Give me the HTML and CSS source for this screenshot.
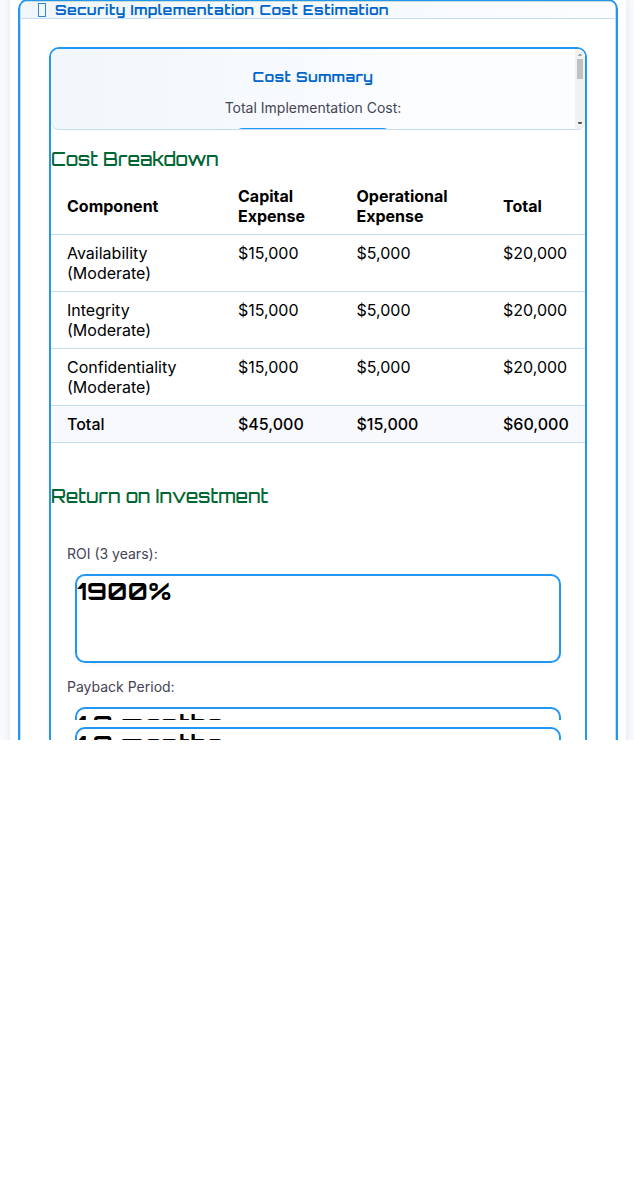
FILE: index.html
```html
<!DOCTYPE html>
<html lang="en">
<head>
<meta charset="utf-8">
<title>Security Implementation Cost Estimation</title>
<link rel="stylesheet" href="styles.css">
</head>
<body>
<div class="page">
  <div class="panel">
    <section class="widget">
      <header class="widget-head"><i class="glyph"></i><h2>Security Implementation Cost Estimation</h2></header>
      <div class="content">
        <div class="summary">
          <div class="summary-body">
            <h3>Cost Summary</h3>
            <p>Total Implementation Cost:</p>
            <div class="value-edge"></div>
          </div>
          <div class="scrollbar"><svg width="10" height="80" viewBox="0 0 10 80"><path d="M3 7h4L6 5H4z" fill="#a3a3a3"/><path d="M2 10h6v20H2z" fill="#c1c1c1"/><path d="M3 73h4v1L6 75H4L3 74z" fill="#505050"/></svg></div>
        </div>
        <h4 class="section-title first">Cost Breakdown</h4>
        <table>
          <colgroup><col class="c1"><col class="c2"><col class="c3"><col class="c4"></colgroup>
          <thead><tr><th>Component</th><th>Capital<br>Expense</th><th>Operational<br>Expense</th><th>Total</th></tr></thead>
          <tbody>
            <tr><td>Availability<br>(Moderate)</td><td>$15,000</td><td>$5,000</td><td>$20,000</td></tr>
            <tr><td>Integrity<br>(Moderate)</td><td>$15,000</td><td>$5,000</td><td>$20,000</td></tr>
            <tr><td>Confidentiality<br>(Moderate)</td><td>$15,000</td><td>$5,000</td><td>$20,000</td></tr>
            <tr class="total"><td>Total</td><td>$45,000</td><td>$15,000</td><td>$60,000</td></tr>
          </tbody>
        </table>
        <h4 class="section-title second">Return on Investment</h4>
        <div class="metrics">
          <p class="label">ROI (3 years):</p>
          <div class="metric">1900%</div>
          <p class="label payback">Payback Period:</p>
          <div class="slice top-slice"><div class="metric">1.8 months</div></div>
          <div class="slice bottom-slice"><div class="metric">1.8 months</div></div>
        </div>
      </div>
    </section>
  </div>
</div>
</body>
</html>
```

FILE: styles.css
```css
* { box-sizing: border-box; margin: 0; padding: 0; }
body { background: #fff; color: #000; font: 16px/20px Inter, sans-serif; }
.page { height: 740px; padding: 0 8px 0 10px; overflow: hidden; background: #f8f9fd; }
.panel { height: 760px; padding: 0 8px; background: #fff; box-shadow: 0 0 8px rgba(0, 0, 40, .08); }
.widget { height: 780px; margin-top: -1px; border: 2px solid #2196f3; border-radius: 10px; background: #fff; box-shadow: inset 0 0 0 1px #c8dcda; overflow: hidden; }
.widget-head { display: flex; align-items: center; height: 18px; padding-left: 17px; background: linear-gradient(90deg, #f1f6fb, #fbfdff); border-top: 1px solid #c8dcd2; border-bottom: 1px solid #c4dcf4; margin: 0 1px; }
h2, h3, h4, .metric { font-family: Orbitron, "DejaVu Sans", sans-serif; white-space: nowrap; }
h2, h3 { color: #06c; font-size: 14px; font-weight: 700; line-height: 18px; letter-spacing: .51px; }
.glyph { width: 8px; height: 14px; margin-right: 9px; border: 1px solid #3385d6; }
.content { height: 720px; margin: 28px 29px 0; border: 2px solid #2196f3; border-radius: 10px; }
.summary { display: flex; height: 81px; border-bottom: 1px solid #c4dcf4; border-radius: 8px; overflow: hidden; background: linear-gradient(90deg, #f1f6fb, #fbfdff 70%); }
.summary-body { flex: 1; display: flex; flex-direction: column; align-items: center; padding-top: 19px; }
.summary p, .label { color: #445; font-size: 14px; line-height: 20px; }
.summary p { margin-top: 12px; }
.value-edge { flex: none; width: 160px; height: 20px; margin-top: 10px; border: 2px solid #2196f3; border-radius: 10px; }
.scrollbar { width: 10px; background: #f1f1f1; }
.scrollbar svg { display: block; }
.section-title { color: #063; font-size: 18px; font-weight: 500; line-height: 24px; }
.first { margin-top: 17px; }
table { width: 534px; margin-top: 7px; border-collapse: collapse; table-layout: fixed; }
.c1 { width: 171px; } .c2 { width: 118.5px; } .c3 { width: 146.5px; } .c4 { width: 98px; }
th, td { padding: 8px 0 8px 16px; text-align: left; vertical-align: top; border-bottom: 1px solid #c4dcf4; white-space: nowrap; }
th { font-weight: 700; vertical-align: middle; }
.total { background: #f8f9fc; font-weight: 500; }
.second { margin-top: 41px; }
.metrics { padding: 36px 16px 0; }
.metric { height: 89px; margin: 0 8px; border: 2px solid #2196f3; border-radius: 10px; font-size: 24px; font-weight: 700; line-height: 30px; letter-spacing: .5px; box-shadow: 0 2px 4px rgba(0, 0, 0, .04); }
.label + .metric { margin-top: 10px; }
.payback { margin-top: 14px; }
.slice { overflow: hidden; height: 13px; }
.top-slice { margin-top: 10px; }
.bottom-slice { margin-top: 7px; }
```
